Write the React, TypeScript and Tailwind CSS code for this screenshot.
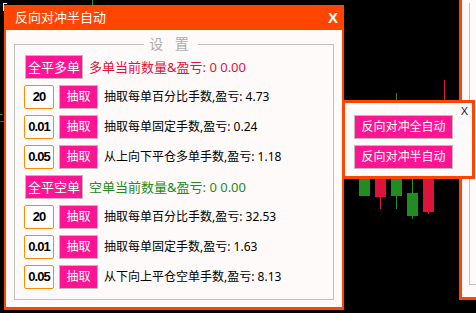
import React from 'react'

const FONT = "font-['Noto_Sans','Noto_Sans_CJK_SC',sans-serif]"

const longRows = [
  { val: '20', text: '抽取每单百分比手数,盈亏: 4.73' },
  { val: '0.01', text: '抽取每单固定手数,盈亏: 0.24' },
  { val: '0.05', text: '从上向下平仓多单手数,盈亏: 1.18' },
]

const shortRows = [
  { val: '20', text: '抽取每单百分比手数,盈亏: 32.53' },
  { val: '0.01', text: '抽取每单固定手数,盈亏: 1.63' },
  { val: '0.05', text: '从下向上平仓空单手数,盈亏: 8.13' },
]

// candles behind the panels: [left, top, width, height, color]
const bars: [number, number, number, number, string][] = [
  [92, 0, 1, 5, '#228b22'],
  [0, 114, 3, 1, '#228b22'],
  [0, 121, 4, 1, '#dc143c'],
  [396, 93, 1, 10, '#228b22'],
  [444, 80, 1, 23, '#dc143c'],
  [359, 175, 11, 21, '#228b22'],
  [375, 175, 11, 22, '#dc143c'],
  [380, 197, 1, 12, '#dc143c'],
  [391, 175, 11, 21, '#228b22'],
  [396, 196, 1, 13, '#228b22'],
  [412, 175, 1, 18, '#228b22'],
  [407, 193, 11, 23, '#228b22'],
  [412, 216, 1, 3, '#228b22'],
  [423, 175, 11, 37, '#dc143c'],
  [428, 212, 1, 2, '#dc143c'],
]

function PinkButton({ children, className = '' }: { children: React.ReactNode; className?: string }) {
  return (
    <button
      className={`flex h-[24px] shrink-0 items-center justify-center border border-[#c4b4bc] bg-[#ff1493] text-[12px] leading-none text-white ${className}`}
    >
      {children}
    </button>
  )
}

function ValueRow({ val, text }: { val: string; text: string }) {
  return (
    <div className="flex h-[24px] items-center">
      <div className="flex h-[24px] w-[30px] items-center justify-center rounded-[2px] border border-[#ff8c00] bg-white font-['Liberation_Sans',sans-serif] text-[13px] font-bold tracking-[-1px] text-black">
        {val}
      </div>
      <PinkButton className="ml-[5px] w-[39px]">抽取</PinkButton>
      <span className="ml-[6px] text-[12px] leading-none text-[#000]">{text}</span>
    </div>
  )
}

export default function App() {
  return (
    <div className={`relative h-[313px] w-[476px] overflow-hidden bg-black ${FONT}`}>
      {bars.map(([l, t, w, h, c], i) => (
        <div key={i} className="absolute" style={{ left: l, top: t, width: w, height: h, background: c }} />
      ))}

      {/* window behind on the right */}
      <div className="absolute left-[459px] top-[-20px] h-[320px] w-[40px] border-[3px] border-[#ff4500] bg-[#fffafa] pb-[12px] pl-[7px] pt-[20px]">
        <div className="h-full border-b border-l border-[#c0c0c0]" />
      </div>

      {/* top-left highlight */}
      <div className="absolute left-[3px] top-[3px] h-px w-[4px] bg-white" />
      <div className="absolute left-[3px] top-[3px] h-[8px] w-px bg-white" />

      {/* main window */}
      <div className="absolute left-[4px] top-[5px] flex h-[305px] w-[340px] flex-col border-x-2 border-b-[3px] border-[#ff4500] bg-[#fffafa]">
        <div className="-mx-[2px] flex h-[25px] shrink-0 items-center justify-between bg-[#ff4500] pl-[11px] pr-[6px]">
          <span className="text-[13px] leading-none text-white">反向对冲半自动</span>
          <span className="font-['Liberation_Sans',sans-serif] text-[15px] font-bold leading-none text-white">X</span>
        </div>
        <div className="relative mx-[8px] mb-[7px] mt-[14px] flex flex-1 flex-col gap-[6px] border border-[#c0c0c0] pl-[9px] pt-[10px]">
          <span className="absolute left-[129px] top-[-9px] w-[54px] bg-[#fffafa] text-center text-[14px] leading-[16px] tracking-[4px] text-[#acacac]">
            设 置
          </span>
          <div className="flex h-[24px] items-center">
            <PinkButton className="ml-px w-[58px] text-[13px]">全平多单</PinkButton>
            <span className="ml-[6px] text-[13px] leading-none text-[#dc143c]">多单当前数量&amp;盈亏: 0 0.00</span>
          </div>
          {longRows.map((r) => (
            <ValueRow key={r.text} {...r} />
          ))}
          <div className="flex h-[24px] items-center">
            <PinkButton className="ml-px w-[58px] text-[13px]">全平空单</PinkButton>
            <span className="ml-[6px] text-[13px] leading-none text-[#228b22]">空单当前数量&amp;盈亏: 0 0.00</span>
          </div>
          {shortRows.map((r) => (
            <ValueRow key={r.text} {...r} />
          ))}
        </div>
      </div>

      {/* small window */}
      <div className="absolute left-[342px] top-[100px] flex h-[79px] w-[133px] flex-col gap-[6px] border-[3px] border-[#ff4500] bg-[#fffafa] pl-[9px] pt-[12px]">
        <span className="absolute right-[4px] top-[3px] font-['Liberation_Sans',sans-serif] text-[11px] leading-none text-[#1a1a30]">X</span>
        <PinkButton className="w-[99px]">反向对冲全自动</PinkButton>
        <PinkButton className="w-[99px]">反向对冲半自动</PinkButton>
      </div>
    </div>
  )
}
